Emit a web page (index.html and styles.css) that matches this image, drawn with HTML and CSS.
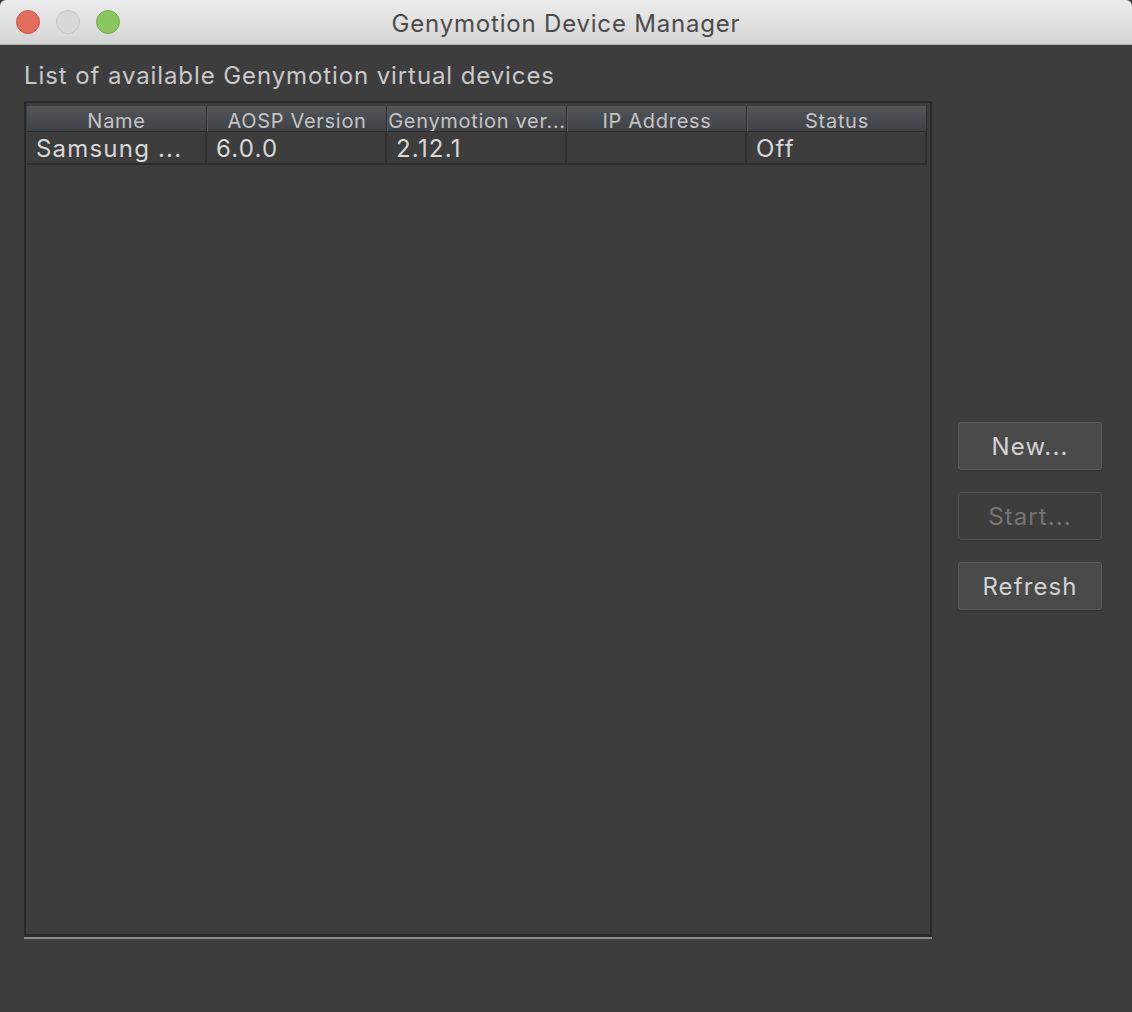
FILE: index.html
```html
<!DOCTYPE html>
<html lang="en">
<head>
  <meta charset="UTF-8" />
  <title>Genymotion Device Manager</title>
  <link rel="stylesheet" href="styles.css">
</head>
<body>

<div class="window">
  <div class="titlebar">
    <div class="lights">
      <span class="light close"></span>
      <span class="light minimize"></span>
      <span class="light zoom"></span>
    </div>
    <div class="title">Genymotion Device Manager</div>
    <div></div>
  </div>

  <div class="content">
    <div class="caption">List of available Genymotion virtual devices</div>
    <div class="panel">
      <div class="frame">
        <div class="devices">
          <div class="head">Name</div>
          <div class="head">AOSP Version</div>
          <div class="head">Genymotion ver...</div>
          <div class="head">IP Address</div>
          <div class="head">Status</div>

          <div class="cell">Samsung ...</div>
          <div class="cell">6.0.0</div>
          <div class="cell">2.12.1</div>
          <div class="cell"></div>
          <div class="cell">Off</div>
        </div>
      </div>

      <div class="actions">
        <button class="btn">New...</button>
        <button class="btn" disabled>Start...</button>
        <button class="btn">Refresh</button>
      </div>
    </div>
  </div>
</div>

</body>
</html>
```

FILE: styles.css
```css
* { box-sizing: border-box; }
body, html {
  margin: 0; padding: 0; height: 100%;
  font-family: Inter, "Liberation Sans", sans-serif;
  background: #3d3d3d;
}
.window {
  height: 1012px;
  display: flex;
  flex-direction: column;
}
.titlebar {
  height: 45px;
  display: grid;
  grid-template-columns: 1fr auto 1fr;
  align-items: center;
  background: linear-gradient(#ececec, #d4d4d4);
  border-bottom: 1px solid #b1b1b1;
  border-radius: 6px 6px 0 0;
}
.lights {
  display: flex;
  gap: 16px;
  padding-left: 16px;
}
.light {
  width: 24px;
  height: 24px;
  border-radius: 50%;
  display: block;
}
.light.close { background: #e26d5c; border: 1px solid #c9584a; }
.light.minimize { background: #d8d8d8; border: 1px solid #c3c3c3; }
.light.zoom { background: #8ac75e; border: 1px solid #72ad4b; }
.title {
  font-size: 24px;
  color: #4b4b4b;
  letter-spacing: 0.8px;
  padding-top: 2px;
}
.content {
  flex: 1;
  padding: 16px 30px 0 24px;
}
.caption {
  font-size: 24px;
  line-height: 30px;
  color: #c9c9c9;
  letter-spacing: 0.9px;
}
.panel {
  margin-top: 10px;
  display: flex;
  gap: 26px;
}
.frame {
  width: 908px;
  height: 836px;
  border: 2px solid #2a2a2a;
  border-bottom-width: 3px;
  box-shadow: 0 2px 0 #8d8d8d;
  padding: 3px 0 0 1px;
}
.devices {
  display: grid;
  grid-template-columns: repeat(5, 180px);
  border-bottom: 2px solid #2e2e2e;
  width: 900px;
}
.head {
  height: 26px;
  line-height: 26px;
  padding-top: 2px;
  text-align: center;
  font-size: 20px;
  letter-spacing: 0.7px;
  color: #c4c4c4;
  background: linear-gradient(#51565b, #3f4246);
  border-right: 1px solid #2c2c2c;
  border-left: 1px solid #5a5d60;
  border-bottom: 1px solid #2b2b2b;
  white-space: nowrap;
  overflow: hidden;
}
.head:first-child { border-left: none; }
.cell {
  height: 31px;
  line-height: 30px;
  padding: 2px 0 0 9px;
  font-size: 24px;
  color: #d7d7d7;
  letter-spacing: 1.2px;
  border-right: 2px solid #2e2e2e;
  white-space: nowrap;
}
.actions {
  width: 144px;
  align-self: center;
  display: flex;
  flex-direction: column;
  gap: 22px;
  margin-top: -6px;
}
.btn {
  height: 48px;
  font-family: inherit;
  font-size: 24px;
  letter-spacing: 1.1px;
  color: #d2d2d2;
  background: #4a4a4a;
  border: 1px solid #5c5c5c;
  border-radius: 3px;
  box-shadow: 0 1px 1px #2e2e2e;
  cursor: pointer;
}
.btn:disabled {
  color: #767676;
  background: #3d3d3d;
  border-color: #555;
  cursor: default;
}
```
